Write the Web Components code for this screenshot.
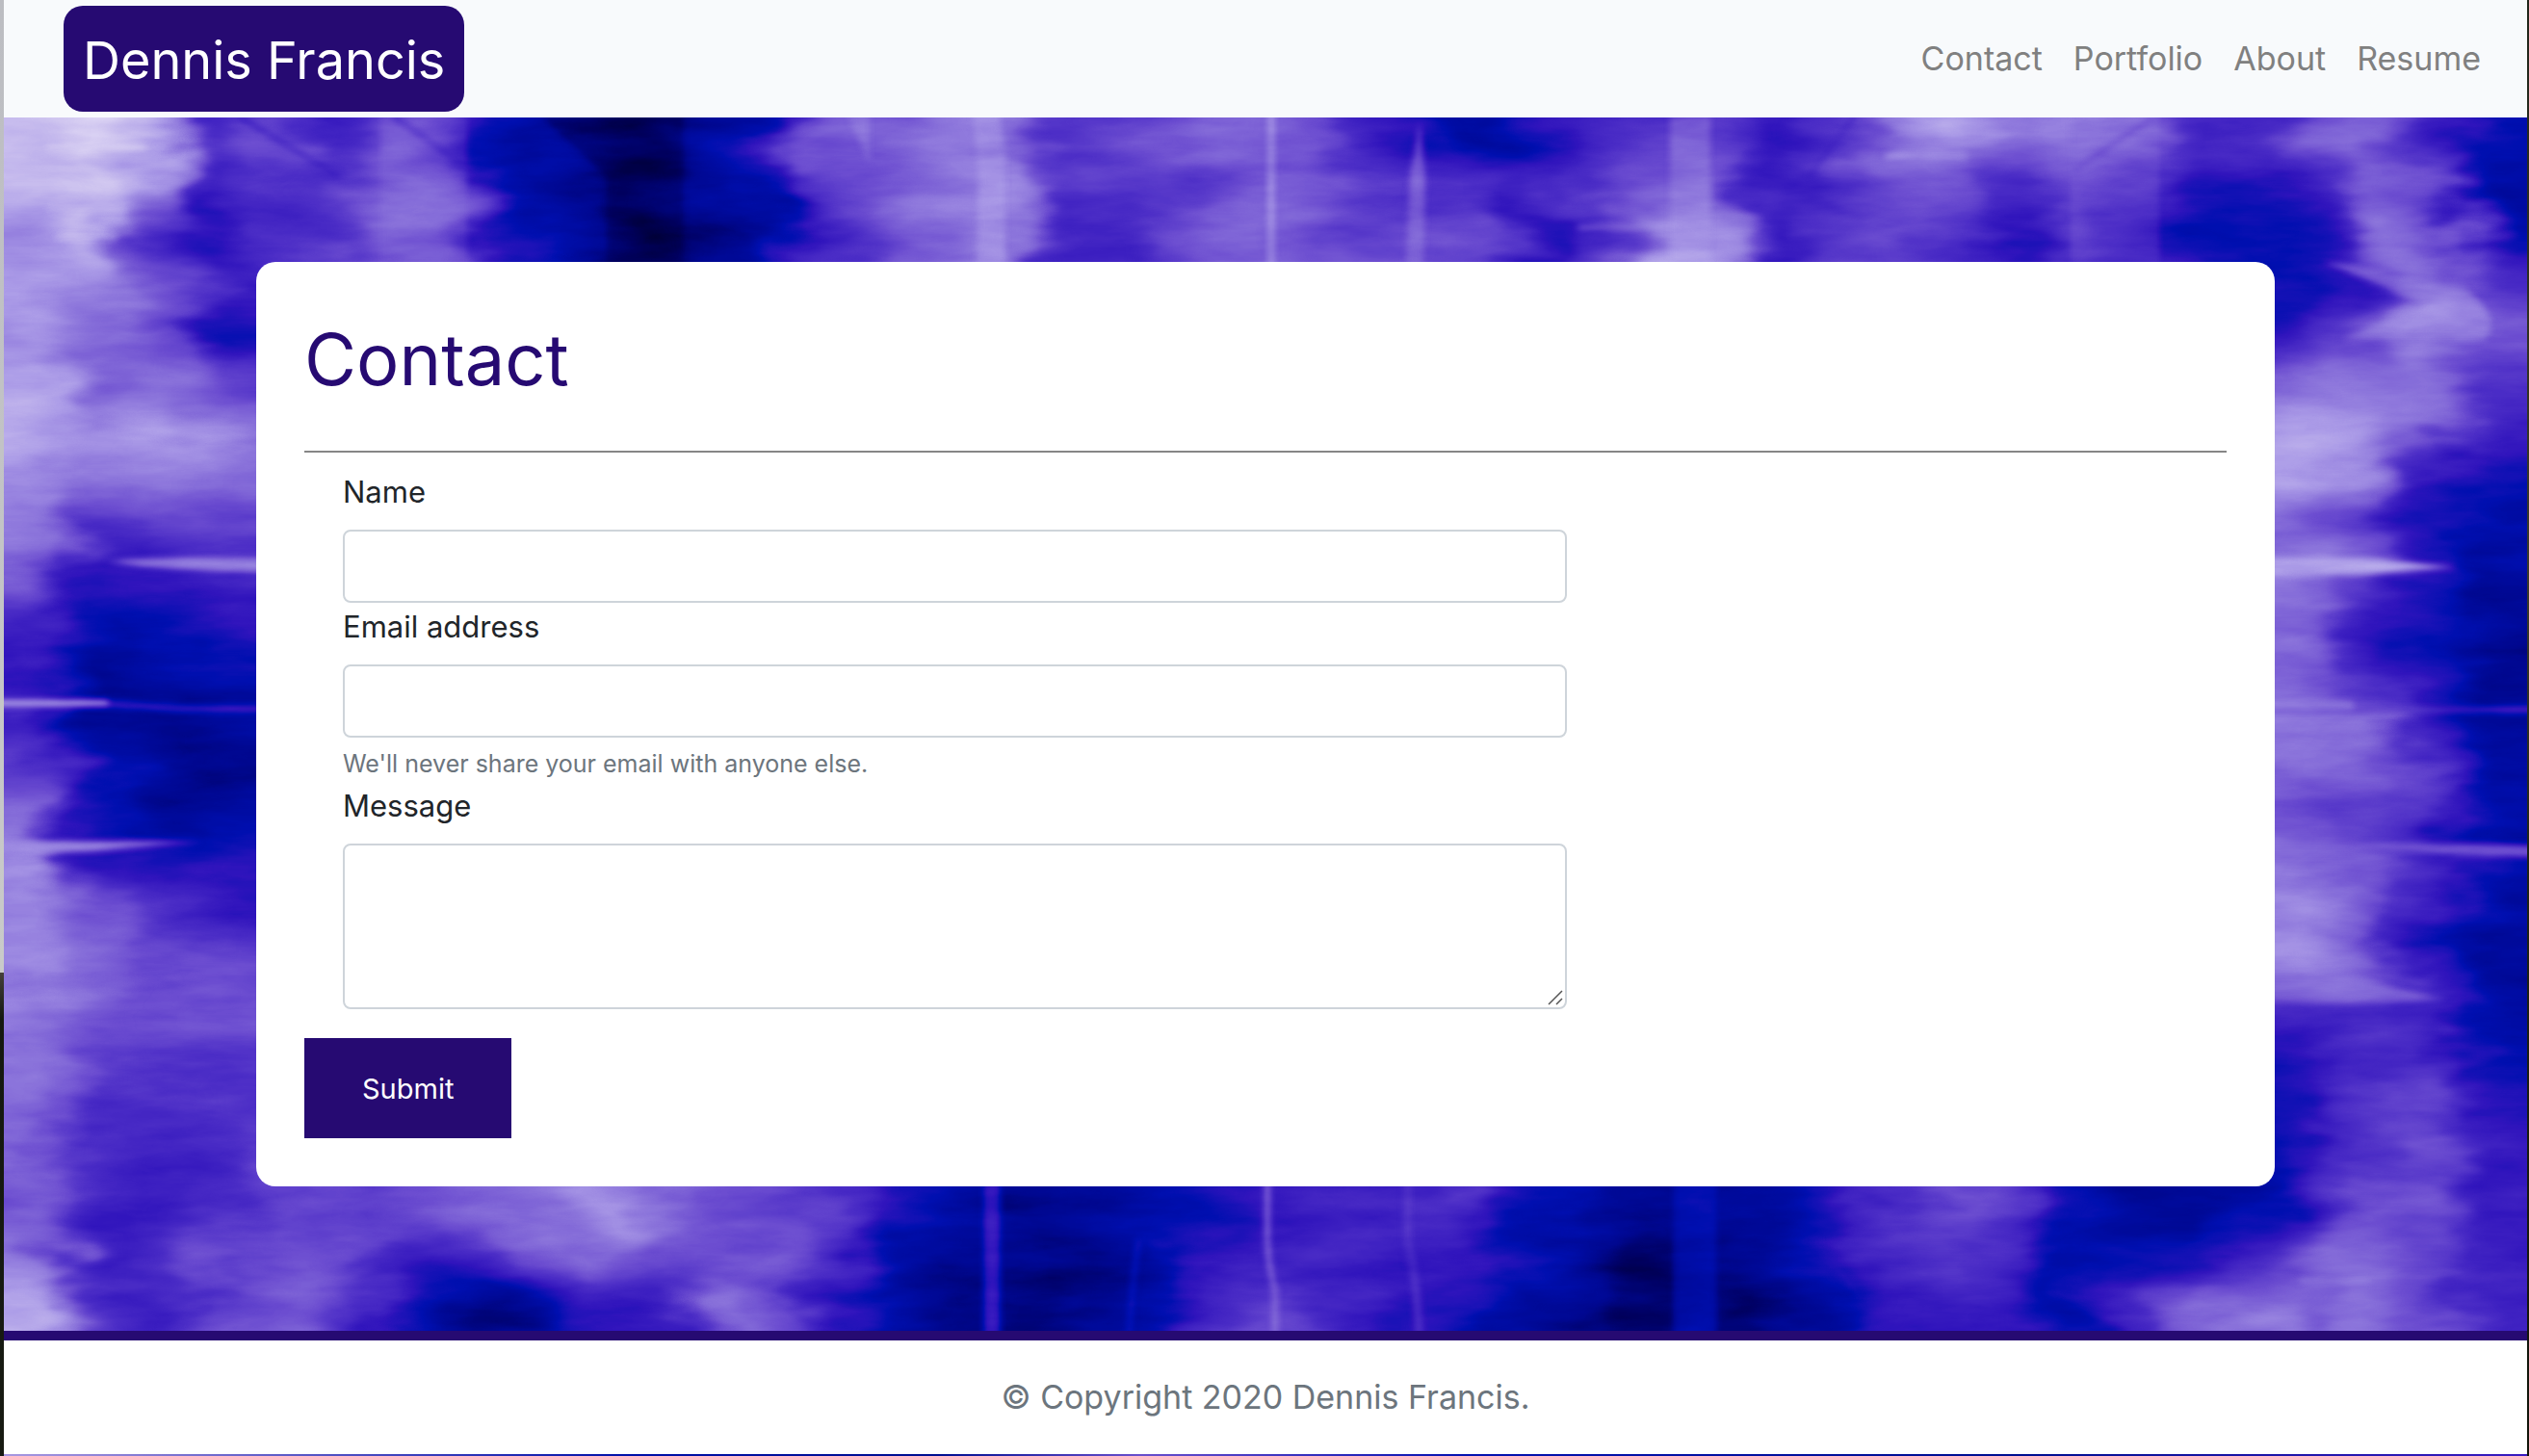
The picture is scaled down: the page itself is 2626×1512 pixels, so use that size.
<!DOCTYPE html>
<html lang="en">
<head>
<meta charset="utf-8">
<title>Contact | Dennis Francis</title>
<style>
  :root { --brand: #260a72; --ink: #212529; --muted: #6c757d; }
  body { margin: 0; font-family: Inter, "Liberation Sans", sans-serif; font-size: 32px; line-height: 48px; color: var(--ink); }
</style>
</head>
<body>
<desktop-frame>
  <site-header>
    <a slot="brand" href="#home">Dennis Francis</a>
    <nav-link href="#contact">Contact</nav-link>
    <nav-link href="#portfolio">Portfolio</nav-link>
    <nav-link href="#about">About</nav-link>
    <nav-link href="#resume">Resume</nav-link>
  </site-header>
  <page-stage>
    <content-card heading="Contact">
      <contact-form></contact-form>
    </content-card>
  </page-stage>
  <site-footer>© Copyright 2020 Dennis Francis.</site-footer>
</desktop-frame>

<script>
const define = (name, html, setup) => customElements.define(name, class extends HTMLElement {
  connectedCallback() {
    if (this.shadowRoot) return;
    const root = this.attachShadow({ mode: 'open' });
    root.innerHTML = '<style>*{box-sizing:border-box}</style>' + html;
    if (setup) setup(this, root);
  }
});

/* the slivers of desktop either side of the browser window */
define('desktop-frame', `
<style>
  :host { display: grid; grid-template-columns: 4px minmax(0, 1fr) 2px; min-height: 100vh; }
  .left { background: linear-gradient(#bcbdc2 0, #c9cac9 66.8%, #45403c 66.8%, #15190f 70%, #171a12); }
  .right { background: linear-gradient(#20251a, #3a3a2a 40%, #1c2216 60%, #101409); }
  .window { display: flex; flex-direction: column; background: linear-gradient(90deg, #a898e0, #0010a8 25%, #000f90 37%, #6a50cc 45%, #0512b0 58%, #000f90 80%, #3a1cc0); }
</style>
<div class="left"></div><div class="window"><slot></slot></div><div class="right"></div>`);

define('site-header', `
<style>
  :host { display: block; background: #f8fafc; }
  header { display: flex; align-items: center; justify-content: space-between; padding: 6px 32px 6px 62px; }
  .brand { background: var(--brand); border-radius: 20px; padding: 12px 20px 8px; font-size: 54px; line-height: 90px; }
  ::slotted([slot=brand]) { color: #fff; text-decoration: none; }
  nav { display: flex; }
</style>
<header><div class="brand"><slot name="brand"></slot></div><nav aria-label="Main"><slot></slot></nav></header>`);

define('nav-link', `
<style>
  :host { display: block; }
  a { display: block; padding: 0 16px; font-size: 34px; line-height: 54px; color: #808080; text-decoration: none; }
</style>
<a><slot></slot></a>`, (el, root) => { root.querySelector('a').href = el.getAttribute('href'); });

define('page-stage', `
<style>
  :host { display: block; position: relative; padding: 150px 10%; }
  paint-backdrop { position: absolute; inset: 0; }
  slot { display: block; position: relative; }
</style>
<paint-backdrop></paint-backdrop><slot></slot>`);

define('content-card', `
<style>
  :host { display: block; background: #fff; border-radius: 20px; padding: 50px; }
  h1 { margin: 0; font-size: 74px; line-height: 102px; font-weight: 400; color: var(--brand); }
  hr { margin: 44px 0 16px; border: 0; height: 2px; background: #868686; }
</style>
<h1></h1><hr><slot></slot>`, (el, root) => { root.querySelector('h1').textContent = el.getAttribute('heading'); });

define('form-field', `
<style>
  :host { display: block; }
  label { display: block; margin-bottom: 14px; font-size: 31px; line-height: 50px; }
  input, textarea { display: block; width: 100%; height: 76px; padding: 12px 24px; border: 2px solid #ced4da; border-radius: 8px; background: #fff; color: #495057; font: inherit; outline: 0; }
  textarea { height: 172px; resize: none; }
  .area { position: relative; }
  .area svg { position: absolute; right: 4px; bottom: 4px; width: 16px; height: 16px; }
  small { display: block; margin-top: 8px; font-size: 25px; line-height: 38px; color: var(--muted); }
</style>
<label for="control"></label>`, (el, root) => {
  root.querySelector('label').textContent = el.getAttribute('label');
  const type = el.getAttribute('type');
  root.lastElementChild.insertAdjacentHTML('afterend', type === 'area'
    ? '<div class="area"><textarea id="control"></textarea><svg viewBox="0 0 16 16" aria-hidden="true"><path d="M1 15 15 1M9 15l6-6" stroke="#555" stroke-width="1.5"/></svg></div>'
    : `<input id="control" type="${type}">`);
  const help = el.getAttribute('help');
  if (help) {
    const small = document.createElement('small');
    small.id = 'help';
    small.textContent = help;
    root.append(small);
    root.querySelector('#control').setAttribute('aria-describedby', 'help');
  }
});

define('contact-form', `
<style>
  :host { display: block; }
  .fields { margin-left: 40px; width: calc(66.667% - 60px); }
  button { display: block; margin-top: 30px; padding: 29px 60px 27px; border: 0; background: var(--brand); color: #fff; font: inherit; font-size: 29px; line-height: 48px; }
</style>
<form>
  <div class="fields">
    <form-field label="Name" type="text"></form-field>
    <form-field label="Email address" type="email" help="We'll never share your email with anyone else."></form-field>
    <form-field label="Message" type="area"></form-field>
  </div>
  <button type="submit">Submit</button>
</form>`);

define('site-footer', `
<style>
  :host { display: block; border-top: 10px solid var(--brand); background: #fff; }
  footer { padding: 32px 16px; text-align: center; font-size: 34px; line-height: 54px; color: var(--muted); }
</style>
<footer><slot></slot></footer>`);

/* Purple tie-dye painting: soft grey tones, smeared sideways, then toned through a blue-violet ramp. */
define('paint-backdrop', `
<style>
  :host { display: block; overflow: hidden; background: #3518c0; }
  svg { display: block; width: 100%; height: 100%; }
</style>
<svg viewBox="4 122 2620 1260" preserveAspectRatio="none" aria-hidden="true">
  <defs>
    <filter id="soft" filterUnits="userSpaceOnUse" x="-150" y="0" width="2920" height="1500" color-interpolation-filters="sRGB"><feGaussianBlur stdDeviation="20 16"/></filter>
    <filter id="fine" filterUnits="userSpaceOnUse" x="-150" y="0" width="2920" height="1500" color-interpolation-filters="sRGB"><feGaussianBlur stdDeviation="3"/></filter>
    <filter id="smear" filterUnits="userSpaceOnUse" x="-150" y="0" width="2920" height="1500" color-interpolation-filters="sRGB">
      <feTurbulence type="fractalNoise" baseFrequency="0.009 0.022" numOctaves="3" seed="4"/>
      <feColorMatrix values="1 0 0 0 0  0 0 0 0 .5  0 0 0 0 .5  0 0 0 0 1" result="n"/>
      <feDisplacementMap in="SourceGraphic" in2="n" scale="110" xChannelSelector="R" yChannelSelector="G"/>
    </filter>
    <filter id="tone" filterUnits="userSpaceOnUse" x="-150" y="0" width="2920" height="1500" color-interpolation-filters="sRGB">
      <feTurbulence type="fractalNoise" baseFrequency="0.008 0.035" numOctaves="4" seed="9"/>
      <feColorMatrix values="1 0 0 0 0  1 0 0 0 0  1 0 0 0 0  0 0 0 0 1" result="g"/>
      <feComposite in="SourceGraphic" in2="g" operator="arithmetic" k2="1" k3=".14" k4="-.07"/>
      <feComponentTransfer>
        <feFuncR type="table" tableValues="0 0 0 0 .19 .3 .43 .55 .68 .81 .93"/>
        <feFuncG type="table" tableValues="0 0 .03 .06 .08 .18 .31 .46 .62 .77 .91"/>
        <feFuncB type="table" tableValues=".12 .36 .56 .69 .74 .78 .82 .86 .91 .94 .98"/>
      </feComponentTransfer>
    </filter>
  </defs>
  <g filter="url(#tone)">
    <g filter="url(#smear)">
      <g id="tones" filter="url(#soft)"></g>
    </g>
    <g id="across" filter="url(#fine)"></g>
    <g id="down" filter="url(#fine)"></g>
  </g>
</svg>`, (el, root) => {
  const grey = v => { const n = Math.round(v * 255); return `rgb(${n},${n},${n})`; };
  const cells = (x, y, w, h, rows) => rows.map((row, r) => row.split(' ').map((v, c, all) => {
    const padL = c === 0 ? 90 : 0, padR = c === all.length - 1 ? 90 : 0;
    return `<rect x="${x + c * w - padL}" y="${y + r * h}" width="${w + padL + padR + 1}" height="${h + 1}" fill="${grey(v / 100)}"/>`;
  }).join('')).join('');
  let s = `<rect x="-150" y="0" width="2920" height="1500" fill="${grey(.4)}"/>`;
  const left = ['80 75 60 45','75 68 60 32','80 62 65 55','85 78 80 70','75 70 72 68','72 48 55 55','65 38 40 45','45 28 33 40','40 20 25 28','45 22 22 25','55 30 22 18','68 32 25 28','75 40 35 38','72 65 50 40','75 65 58 60','72 62 58 60','68 55 50 50','68 48 48 52','65 50 45 45','60 42 43 50','72 42 45 58','82 50 45 60','82 50 45 60'];
  const right = ['30 40 68 50','38 50 75 62','65 68 68 50','82 78 68 45','80 75 40 30','65 55 35 28','72 60 40 25','65 42 32 22','65 45 35 20','72 70 40 24','65 66 55 26','60 55 50 28','70 65 48 27','75 66 42 26','75 65 40 24','45 50 45 26','35 48 50 30','33 50 58 38','38 50 58 42','42 60 60 42','62 65 55 43','62 70 60 45','62 70 60 45'];
  s += cells(0, 270, 69, 50.5, left) + cells(2346, 270, 69, 50.5, right);
  const t1 = '88 95 85 50 58 45 60 52 30 22 14 22 30 62 62 70 72 52 55 60 65 62 45 38 22 38 45 50 55 40 50 70 80 70 72 65 48 50 65 65 45 30';
  const t2 = '85 88 78 42 50 52 65 60 25 20 12 18 28 55 58 68 75 52 52 52 60 63 55 50 50 42 55 65 65 42 55 62 60 45 58 48 36 35 45 65 58 25';
  const t3 = '75 88 45 33 48 50 65 65 35 25 11 19 20 45 55 65 72 45 45 58 65 63 58 60 55 35 50 78 75 40 55 58 50 36 50 42 30 30 33 70 65 28';
  s += cells(0, 70, 62.5, 50, [t1, t1, t2, t3]);
  t3.split(' ').slice(5, 37).forEach((v, c) => s += `<rect x="${312 + c * 62.5}" y="270" width="63.5" height="50" fill="${grey(v / 100)}"/>`);
  const b1 = '58 55 60 65 70 78 68 58 58 48 30 26 20 22 28 32 40 45 42 50 33 30 22 20 25 33 48 60 52 30 23 22 27';
  const b2 = '62 58 42 45 62 70 60 58 60 50 28 20 18 18 22 42 45 45 44 42 32 25 12 17 20 33 47 50 46 28 30 30 45';
  const b3 = '62 50 30 15 20 38 40 70 60 38 25 18 15 20 28 48 55 45 36 38 25 20 12 17 12 25 40 42 40 28 45 65 72';
  [[1182, b1], [1232, b1], [1282, b2], [1332, b3], [1382, b3]].forEach(([y, row]) => {
    row.split(' ').forEach((v, c) => s += `<rect x="${275 + c * 63.4}" y="${y}" width="64.4" height="51" fill="${grey(v / 100)}"/>`);
  });
  root.querySelector('#tones').innerHTML = s;

  const line = (d, w, v, o = 1) => `<path d="${d}" fill="none" stroke="${grey(v)}" stroke-width="${w}" stroke-opacity="${o}" stroke-linecap="round"/>`;
  const blade = (d, v, o = 1) => `<path d="${d}" fill="${grey(v)}" fill-opacity="${o}"/>`;
  root.querySelector('#across').innerHTML =
    blade('M110 583 Q180 576 300 580 V594 Q200 596 110 583Z', .72) +
    line('M-80 731 H110 L190 736 H300', 6, .55, .8) + line('M-80 730 H110', 6, .82) +
    blade('M-80 876 L90 873 L210 874 L100 884 L-80 890Z', .74) +
    blade('M-80 1020 L210 1014 L120 1026 L-80 1046Z', .7, .6) +
    blade('M100 440 Q160 420 290 452 Q180 462 100 440Z', .8, .5) +
    blade('M2330 578 L2470 580 L2550 589 L2450 597 L2330 599Z', .8) +
    line('M2330 737 H2720', 6, .55, .8) + line('M2330 733 H2440', 9, .74, .7) +
    blade('M2440 876 Q2510 874 2720 880 V889 Q2540 894 2440 876Z', .62) +
    blade('M2330 1012 L2430 1012 L2540 1038 L2420 1042 L2330 1038Z', .68, .8) +
    blade('M2410 270 L2520 318 L2430 352 H2580 Q2600 330 2560 300Z', .75, .6) +
    line('M50 153 H150', 5, 1, .5) + line('M50 218 H130', 5, .95, .35) + line('M60 246 H120', 5, .9, .5) +
    line('M2390 1330 H2460', 5, .76, .5) +
    line('M1640 236 H1740', 5, .82, .5) + line('M1960 162 H2040', 6, .86, .5);
  root.querySelector('#down').innerHTML =
    blade('M1010 120 H1038 L1044 160 V274 H1014 L1016 180Z', .78, .65) +
    line('M1320 115 V276', 7, .78, .8) +
    blade('M1474 128 L1480 180 L1478 274 H1460 L1464 180Z', .7, .7) +
    blade('M1734 120 H1776 V274 H1734Z', .78, .4) +
    blade('M2150 120 H2242 V274 H2150Z', .66, .3) +
    blade('M880 120 H903 V170Z', .76, .4) +
    blade('M395 120 H485 V274 H395Z', .68, .3) +
    blade('M560 120 H710 V274 H630 V184Z', .05, .4) +
    line('M250 122 L350 182', 6, .4, .5) + line('M410 122 L490 176', 6, .42, .5) +
    line('M2155 176 L2235 122', 5, .52, .5) + line('M1880 180 L1925 122', 5, .42, .5) +
    line('M1030 1225 V1390', 17, .47, .8) +
    line('M1316 1225 V1290 Q1318 1320 1324 1340 V1390', 7, .66, .9) +
    line('M1462 1225 V1290 Q1470 1320 1474 1390', 8, .52, .8) +
    line('M1182 1290 Q1176 1330 1172 1390', 5, .45, .6) +
    blade('M1738 1225 H1782 V1390 H1738Z', .4, .45) + line('M1885 1288 L1930 1345', 5, .38, .6);
});
</script>
</body>
</html>
